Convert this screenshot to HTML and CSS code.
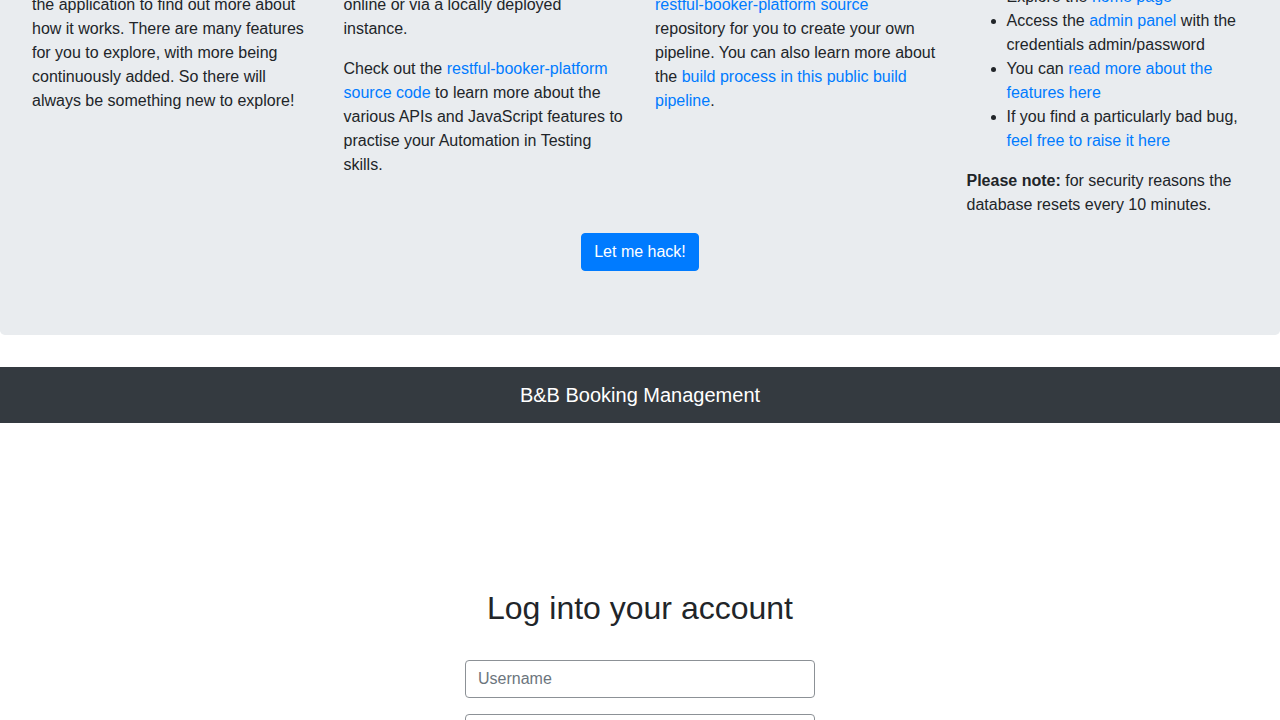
FILE: index.html
```html
<!DOCTYPE html>
<html lang="en">
<head>
<meta charset="utf-8">
<title>Restful Booker Platform Demo</title>
<link rel="stylesheet" href="styles.css">
</head>
<body>
<div class="page">
  <div class="jumbotron">
    <h1 class="welcome-title">Welcome to Restful Booker Platform</h1>
    <div class="row">
      <div class="col">
        <p>Welcome to Restful Booker Platform, a<br>sandbox built for you to practise. Use<br>the application to find out more about how it works. There are many features for you to explore, with more being continuously added. So there will always be something new to explore!</p>
      </div>
      <div class="col">
        <p>This platform has been built so you<br>can practise your testing skills either<br>online or via a locally deployed instance.</p>
        <p>Check out the <a href="#">restful-booker-platform source code</a> to learn more about the various APIs and JavaScript features to practise your Automation in Testing skills.</p>
      </div>
      <div class="col">
        <p>We use a public build pipeline to deploy<br>this application. You can fork the<br><a href="#">restful-booker-platform source</a> repository for you to create your own pipeline. You can also learn more about the <a href="#">build process in this public build pipeline</a>.</p>
      </div>
      <div class="col">
        <p>Here are some ways to get started:</p>
        <ul class="steps">
          <li>Explore the <a href="#">home page</a></li>
          <li>Access the <a href="#">admin panel</a> with the credentials admin/password</li>
          <li>You can <a href="#">read more about the features here</a></li>
          <li>If you find a particularly bad bug, <a href="#">feel free to raise it here</a></li>
        </ul>
        <p><strong>Please note:</strong> for security reasons the database resets every 10 minutes.</p>
      </div>
    </div>
    <div class="hack-row">
      <button class="btn btn-primary" type="button">Let me hack!</button>
    </div>
  </div>

  <nav class="navbar">
    <span class="navbar-brand">B&amp;B Booking Management</span>
  </nav>

  <section class="login">
    <h2 class="login-title">Log into your account</h2>
    <form class="login-form">
      <input class="form-control" type="text" placeholder="Username">
      <input class="form-control" type="password" placeholder="Password">
      <button class="btn btn-primary login-btn" type="button">Login</button>
    </form>
  </section>
</div>
</body>
</html>
```
FILE: styles.css
```css
* {
  box-sizing: border-box;
}

html, body {
  margin: 0;
  padding: 0;
}

body {
  font-family: "Liberation Sans", Arial, Helvetica, sans-serif;
  font-size: 16px;
  line-height: 24px;
  color: #212529;
  background: #ffffff;
}

a {
  color: #007bff;
  text-decoration: none;
}

p {
  margin: 0 0 16px 0;
}

/* the page is shown scrolled down, as in the captured view */
.page {
  margin-top: -191px;
}

.jumbotron {
  background: #e9ecef;
  padding: 64px 32px;
  margin-bottom: 32px;
  border-radius: 4.8px;
}

.welcome-title {
  margin: 0 0 24px 0;
  font-size: 40px;
  line-height: 48px;
  font-weight: 500;
  text-align: center;
}

.row {
  display: flex;
  margin: 0 -15px;
}

.col {
  flex: 0 0 25%;
  max-width: 25%;
  padding: 0 15px;
}

.steps {
  margin: 0 0 16px 0;
  padding-left: 40px;
}

.hack-row {
  display: flex;
  justify-content: center;
}

.btn {
  font-family: inherit;
  font-size: 16px;
  line-height: 24px;
  padding: 6px 12px;
  border: 1px solid transparent;
  border-radius: 4px;
  cursor: pointer;
}

.btn-primary {
  background: #007bff;
  border-color: #007bff;
  color: #ffffff;
}

.navbar {
  background: #343a40;
  height: 56px;
  padding: 8px 16px;
  display: flex;
  align-items: center;
  justify-content: center;
}

.navbar-brand {
  color: #ffffff;
  font-size: 20px;
  line-height: 30px;
  padding: 5px 0;
}

.login {
  padding-top: 166px;
  display: flex;
  flex-direction: column;
  align-items: center;
}

.login-title {
  margin: 0 0 33px 0;
  font-size: 32px;
  line-height: 38px;
  font-weight: 500;
}

.login-form {
  width: 350px;
  display: flex;
  flex-direction: column;
  gap: 16px;
}

.form-control {
  display: block;
  width: 100%;
  height: 38px;
  padding: 6px 12px;
  font-family: inherit;
  font-size: 16px;
  line-height: 24px;
  color: #495057;
  background: #ffffff;
  border: 1px solid #8c9196;
  border-radius: 4px;
}

.form-control::placeholder {
  color: #6c757d;
}

.login-btn {
  align-self: flex-start;
}
```
